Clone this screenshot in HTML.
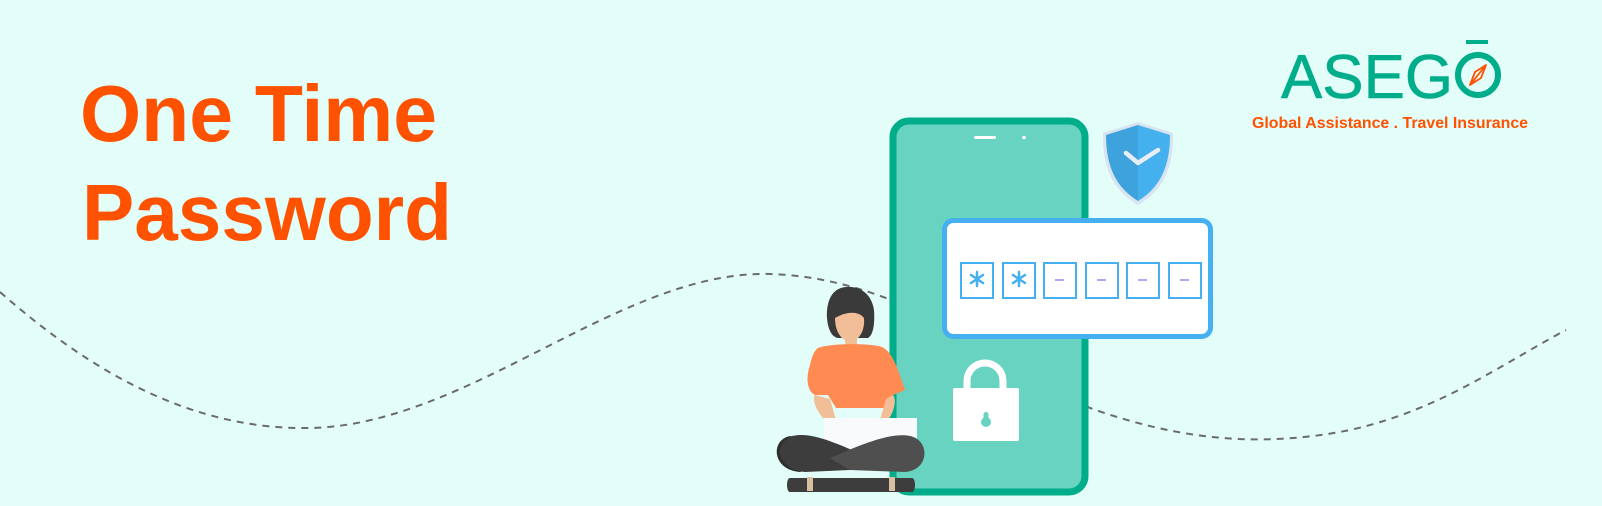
<!DOCTYPE html>
<html><head><meta charset="utf-8"><style>
html,body{margin:0;padding:0;background:#e3fdf9;}
body{width:1602px;height:506px;overflow:hidden;position:relative;font-family:"Liberation Sans",sans-serif;}
svg{position:absolute;left:0;top:0;}
</style></head><body>
<svg width="1602" height="506" viewBox="0 0 1602 506">
<rect width="1602" height="506" fill="#e3fdf9"/>
<text x="80" y="141" font-family="Liberation Sans, sans-serif" font-weight="bold" font-size="80" fill="#ff5200" textLength="357" lengthAdjust="spacingAndGlyphs">One Time</text>
<text x="82" y="240" font-family="Liberation Sans, sans-serif" font-weight="bold" font-size="80" fill="#ff5200" textLength="370" lengthAdjust="spacingAndGlyphs">Password</text>
<!-- logo -->
<text x="1281" y="98" font-family="Liberation Sans, sans-serif" font-size="62" fill="#00ad8b" stroke="#00ad8b" stroke-width="0.6" textLength="172" lengthAdjust="spacingAndGlyphs">ASEG</text>
<rect x="1466" y="40" width="22" height="4" fill="#00ad8b"/>
<circle cx="1478" cy="75" r="20" fill="none" stroke="#00ad8b" stroke-width="6"/>
<path d="M1486 65 L1470 85 M1486 65 L1481 78 L1470 85 L1475 72 Z" stroke="#ff5200" stroke-width="1.8" fill="none" stroke-linejoin="round"/>
<text x="1252" y="128" font-family="Liberation Sans, sans-serif" font-weight="bold" font-size="16" fill="#ff5200" textLength="276" lengthAdjust="spacingAndGlyphs">Global Assistance . Travel Insurance</text>
<!-- dashed wave -->
<path d="M0 292 C100 380 200 430 310 428 C470 425 620 270 770 274 C900 278 1000 360 1090 408 C1180 440 1260 448 1350 430 C1440 410 1500 365 1566 330" fill="none" stroke="#6b6b6b" stroke-width="2" stroke-dasharray="7 6"/>
<!-- phone -->
<rect x="893" y="121" width="192" height="371" rx="16" fill="#68d3c1" stroke="#00ad8b" stroke-width="7"/>
<rect x="974" y="136" width="22" height="3" rx="1.5" fill="#fff"/>
<circle cx="1024" cy="137.5" r="1.8" fill="#fff"/>
<!-- shield -->
<path d="M1138 122 L1103 133 C1102 170 1115 192 1138 205 C1161 192 1174 170 1173 133 Z" fill="#d8e4f2"/>
<path d="M1138 125 L1106 135 C1106 168 1117 188 1138 201 Z" fill="#3ea2dc"/>
<path d="M1138 125 L1170 135 C1170 168 1159 188 1138 201 Z" fill="#44b1ee"/>
<path d="M1126 153 L1138 163 L1158 150" fill="none" stroke="#e8eef6" stroke-width="4.5" stroke-linecap="round" stroke-linejoin="round"/>
<!-- card -->
<rect x="944.5" y="220.5" width="266" height="116" rx="9" fill="#fff" stroke="#45aff0" stroke-width="5"/>
<g fill="none" stroke="#45aff0" stroke-width="2">
<rect x="961" y="263" width="32" height="35"/>
<rect x="1003" y="263" width="32" height="35"/>
<rect x="1044" y="263" width="32" height="35"/>
<rect x="1086" y="263" width="32" height="35"/>
<rect x="1127" y="263" width="32" height="35"/>
<rect x="1169" y="263" width="32" height="35"/>
</g>
<g stroke="#45aff0" stroke-width="2.5" stroke-linecap="round">
<path d="M977 272v14M971 275l12 8M983 275l-12 8"/>
<path d="M1019 272v14M1013 275l12 8M1025 275l-12 8"/>
</g>
<g stroke="#b3a6f5" stroke-width="2"><path d="M1055 280h9M1097 280h9M1138 280h9M1180 280h9"/></g>
<!-- lock -->
<path d="M967 391 v-10 a18 18 0 0 1 36 0 v10" fill="none" stroke="#fff" stroke-width="7"/>
<rect x="953" y="388" width="66" height="53" rx="2" fill="#fff"/>
<circle cx="986" cy="422" r="5" fill="#68d3c1"/>
<rect x="983.5" y="412" width="5" height="10" rx="2.5" fill="#68d3c1"/>
<!-- person -->
<path d="M847 287 C833 287 826 300 827 318 C828 330 832 337 838 338 L868 338 C873 335 875 325 874 310 C872 296 862 286 847 287 Z" fill="#3a3a3a"/>
<path d="M835 318 C835 330 840 340 850 342 C860 340 865 330 864 318 C858 310 845 312 835 318 Z" fill="#f2be98"/>
<path d="M845 338 h12 v8 h-12 Z" fill="#f2be98"/>
<path d="M833 313 C845 312 856 306 862 297 L866 310 C860 300 848 310 833 313Z" fill="#3a3a3a"/>
<path d="M818 348 C830 343 870 343 882 347 C893 352 898 370 905 390 L893 395 L884 408 L836 408 L828 395 L815 395 C808 392 805 380 810 365 C812 355 815 350 818 348 Z" fill="#ff8a52"/>
<path d="M815 395 C812 398 815 410 825 420 L836 420 L830 399 Z" fill="#f2be98"/>
<path d="M893 395 C897 400 894 412 888 420 L880 420 L886 399 Z" fill="#f2be98"/>
<rect x="824" y="418" width="93" height="48" fill="#f8fafc"/>
<path d="M790 436 C770 440 772 470 800 472 L850 458 L800 438 Z" fill="#2f2f2f"/>
<path d="M792 436 C810 432 830 440 870 458 L850 470 L805 472 C780 470 770 446 792 436 Z" fill="#3d3d3d"/>
<path d="M910 436 C930 440 930 470 905 472 L850 470 L830 458 C860 445 890 432 910 436 Z" fill="#4f4f4f"/>
<path d="M790 478 h122 c4 0 4 14 0 14 h-122 c-4 0 -4 -14 0 -14Z" fill="#3d3d3d"/>
<rect x="807" y="477" width="6" height="14" fill="#d9c09e"/>
<rect x="889" y="477" width="6" height="14" fill="#d9c09e"/>
</svg>
</body></html>
